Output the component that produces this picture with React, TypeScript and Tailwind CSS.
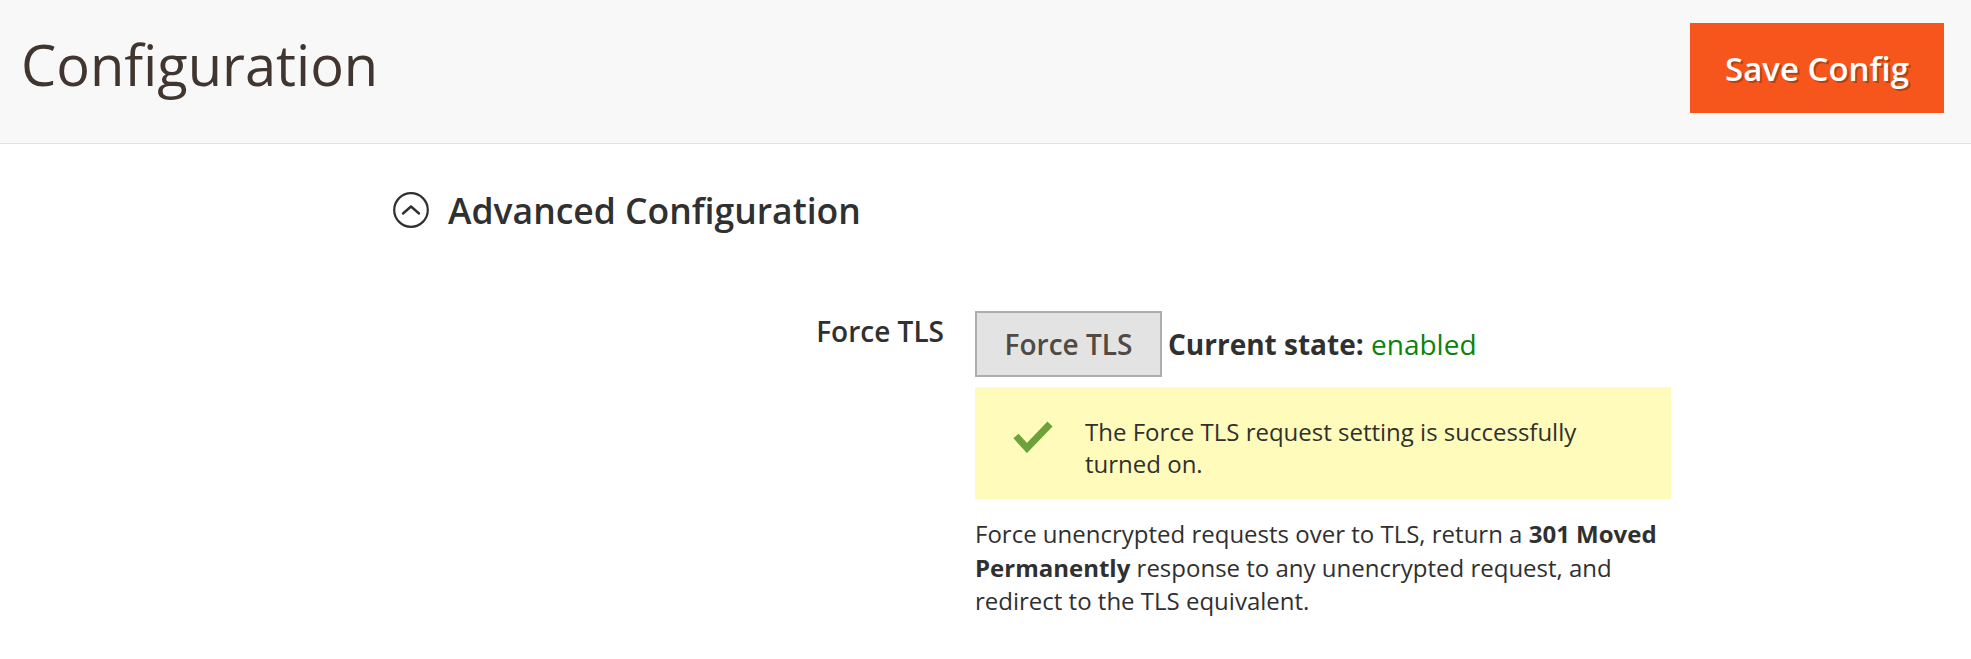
import React from "react";

function CollapseIcon() {
  return (
    <svg width="36" height="36" viewBox="0 0 36 36" fill="none">
      <circle cx="18" cy="18" r="16.8" stroke="#303030" strokeWidth="2.2" />
      <path d="M10 21.5 L18 14.5 L26 21.5" stroke="#303030" strokeWidth="2.4" strokeLinecap="round" strokeLinejoin="round" />
    </svg>
  );
}

function Check() {
  return (
    <svg width="40" height="32" viewBox="0 0 40 32" fill="none">
      <path d="M3 15 L14 27 L37 3" stroke="#6da23a" strokeWidth="7" strokeLinecap="butt" strokeLinejoin="miter" />
    </svg>
  );
}

export default function App() {
  return (
    <div className="w-[1971px] h-[659px] bg-white font-['Open_Sans',sans-serif] overflow-hidden">
      <header className="h-[144px] bg-[#f8f8f8] border-b border-[#e3e3e3] flex items-start justify-between pl-[21px] pr-[27px]">
        <h1 className="mt-[36px] text-[56px] leading-none font-normal text-[#41362f]">Configuration</h1>
        <button className="mt-[23px] w-[254px] h-[90px] bg-[#f6561b] text-white text-[33px] font-semibold leading-none flex items-center justify-center [text-shadow:2px_2px_0_rgba(0,0,0,0.25)]">
          Save Config
        </button>
      </header>

      <div className="pl-[393px]">
        <div className="mt-[46px] h-[40px] flex items-center gap-[19px]">
          <CollapseIcon />
          <h2 className="mt-[2px] text-[35.5px] leading-none font-semibold text-[#303030]">Advanced Configuration</h2>
        </div>

        <div className="mt-[81px] flex gap-[31px]">
          <div className="w-[551px] text-right text-[28px] leading-[40px] font-semibold text-[#303030]">Force TLS</div>
          <div className="w-[696px]">
            <div className="flex items-baseline">
              <button className="w-[187px] h-[66px] bg-[#e3e3e3] border-2 border-[#adadad] text-[28px] font-semibold text-[#514943] flex items-center justify-center leading-none">
                Force TLS
              </button>
              <span className="ml-[6px] text-[28px] text-[#303030]">
                <span className="font-bold">Current state:</span>{" "}
                <span className="text-[#0a830a]">enabled</span>
              </span>
            </div>

            <div className="relative mt-[10px] h-[112px] bg-[#fffbbb] pt-[29px] pb-[19px] pl-[110px] pr-[80px] text-[24px] leading-[32px] text-[#303030]">
              <div className="absolute left-[38px] top-[34px]">
                <Check />
              </div>
              <p>The Force TLS request setting is successfully turned on.</p>
            </div>

            <p className="mt-[18px] text-[24px] leading-[33.5px] text-[#303030]">
              Force unencrypted requests over to TLS, return a <span className="font-bold">301 Moved Permanently</span> response to any unencrypted request, and redirect to the TLS equivalent.
            </p>
          </div>
        </div>
      </div>
    </div>
  );
}
